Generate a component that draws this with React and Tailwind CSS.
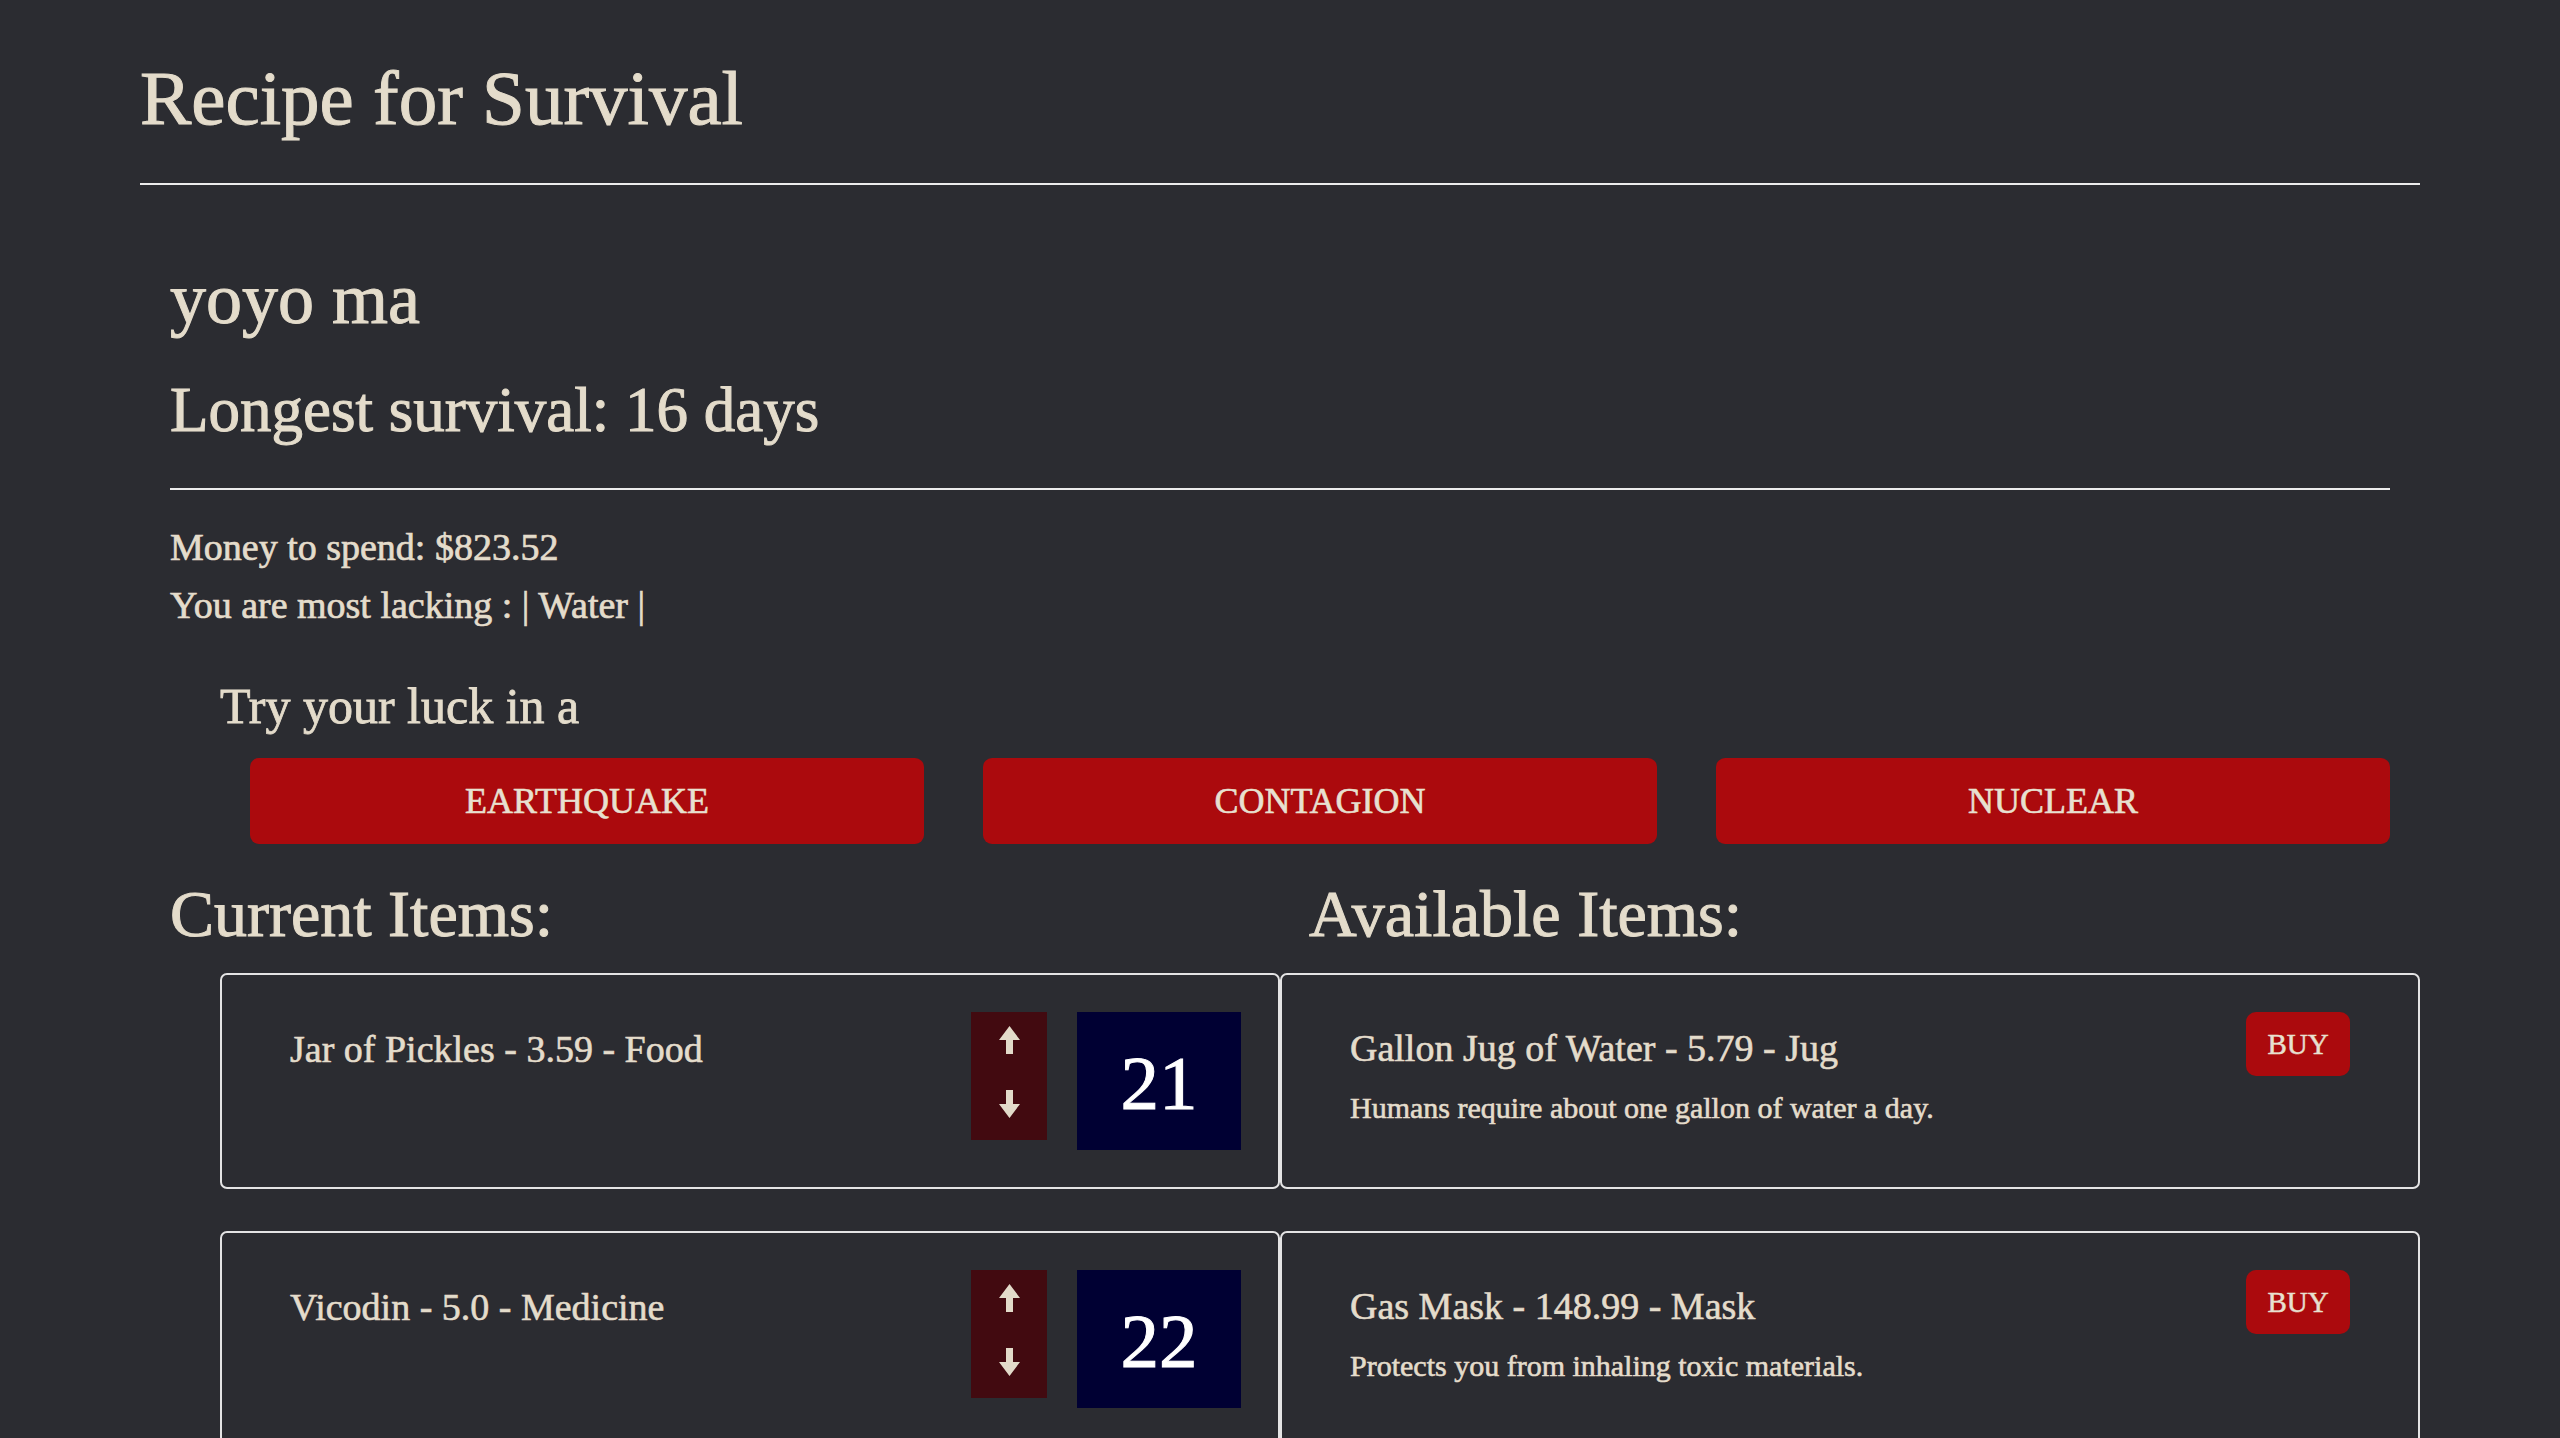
import React from "react";

const currentItems = [
  { label: "Jar of Pickles - 3.59 - Food", qty: 21 },
  { label: "Vicodin - 5.0 - Medicine", qty: 22 },
];

const availableItems = [
  { label: "Gallon Jug of Water - 5.79 - Jug", desc: "Humans require about one gallon of water a day." },
  { label: "Gas Mask - 148.99 - Mask", desc: "Protects you from inhaling toxic materials." },
];

function UpArrow() {
  return (
    <svg width="21" height="28" viewBox="0 0 21 28" className="block">
      <polygon points="10.5,0 21,14 14,14 14,28 7,28 7,14 0,14" fill="#e3dbca" />
    </svg>
  );
}

function DownArrow() {
  return (
    <svg width="21" height="28" viewBox="0 0 21 28" className="block">
      <polygon points="7,0 14,0 14,14 21,14 10.5,28 0,14 7,14" fill="#e3dbca" />
    </svg>
  );
}

function CurrentCard({ item }) {
  return (
    <div className="ml-[80px] border-2 border-[#e4e4e4] rounded-[7px] p-[37px] flex items-start">
      <div className="flex-1 ml-[31px] mt-[18px] text-[38px] leading-none [-webkit-text-stroke:0.6px_currentColor]">{item.label}</div>
      <div className="w-[76px] h-[128px] bg-[#420a10] flex flex-col items-center pt-[14px] gap-[36px]">
        <UpArrow />
        <DownArrow />
      </div>
      <div className="ml-[30px] w-[164px] h-[138px] bg-[#000033] flex items-center justify-center pt-[5px] text-white text-[77px] leading-none [-webkit-text-stroke:1px_currentColor]">
        {item.qty}
      </div>
    </div>
  );
}

function AvailableCard({ item }) {
  return (
    <div className="border-2 border-[#e4e4e4] rounded-[7px] p-[37px] flex items-start">
      <div className="flex-1 ml-[31px] mt-[17px]">
        <div className="text-[38px] leading-none [-webkit-text-stroke:0.6px_currentColor]">{item.label}</div>
        <div className="mt-[26px] text-[30px] leading-none [-webkit-text-stroke:0.6px_currentColor]">{item.desc}</div>
      </div>
      <button className="mr-[31px] w-[104px] h-[64px] rounded-[10px] bg-[#ab0a0d] text-[29px] leading-none text-[#e8e0d0] flex items-center justify-center [-webkit-text-stroke:0.5px_currentColor]">
        BUY
      </button>
    </div>
  );
}

export default function App() {
  return (
    <div className="min-h-screen bg-[#2b2c31] text-[#e4dccb] font-['Liberation_Serif','Times_New_Roman',serif] px-[140px] pb-[60px]">
      <h1 className="pt-[60px] text-[77px] leading-none font-normal [-webkit-text-stroke:1px_currentColor]">Recipe for Survival</h1>
      <div className="mt-[46px] h-[2px] bg-[#ececec]" />

      <div className="px-[30px]">
        <div className="mt-[78px] text-[72px] leading-none [-webkit-text-stroke:1px_currentColor]">yoyo ma</div>
        <div className="mt-[44px] text-[63px] leading-none [-webkit-text-stroke:1px_currentColor]">Longest survival: 16 days</div>
        <div className="mt-[46px] h-[2px] bg-[#ececec]" />
        <div className="mt-[28px] text-[38px] leading-[58px] [-webkit-text-stroke:0.7px_currentColor]">Money to spend: $823.52</div>
        <div className="text-[38px] leading-[58px] [-webkit-text-stroke:0.7px_currentColor]">You are most lacking : | Water |</div>
        <div className="mt-[47px] ml-[50px] text-[50px] leading-none [-webkit-text-stroke:0.8px_currentColor]">Try your luck in a</div>
        <div className="mt-[27px] ml-[80px] flex gap-[59px]">
          {["EARTHQUAKE", "CONTAGION", "NUCLEAR"].map((t) => (
            <button
              key={t}
              className="flex-1 h-[86px] rounded-[9px] bg-[#ab0a0d] text-[#e8e0d0] text-[36px] leading-none flex items-center justify-center [-webkit-text-stroke:0.6px_currentColor]"
            >
              {t}
            </button>
          ))}
        </div>
      </div>

      <div className="mt-[37px] grid grid-cols-2 gap-y-[42px]">
        <div className="ml-[30px] text-[66px] leading-none mb-[-16px] [-webkit-text-stroke:1px_currentColor]">Current Items:</div>
        <div className="ml-[29px] text-[66px] leading-none mb-[-16px] [-webkit-text-stroke:1px_currentColor]">Available Items:</div>
        {currentItems.map((c, i) => (
          <React.Fragment key={i}>
            <CurrentCard item={c} />
            <AvailableCard item={availableItems[i]} />
          </React.Fragment>
        ))}
      </div>
    </div>
  );
}
